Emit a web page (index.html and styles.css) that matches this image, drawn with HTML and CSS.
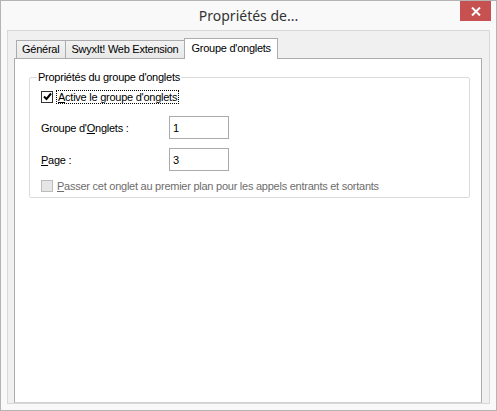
FILE: index.html
```html
<!DOCTYPE html>
<html lang="fr">

<head>
    <meta charset="UTF-8">
    <title>Propriétés de...</title>
    <link rel="stylesheet" href="styles.css">
</head>

<body>
    <div class="window">
        <div class="titlebar">
            <span></span>
            <span class="title">Propriétés de...</span>
            <button class="close" aria-label="Fermer">
                <svg width="10" height="9" viewBox="0 0 10 9">
                    <path d="M1 0.5 L9 8.5 M9 0.5 L1 8.5" stroke="#fff" stroke-width="2" fill="none" />
                </svg>
            </button>
        </div>

        <div class="panel">
            <div class="tabs">
                <div class="tab">Général</div>
                <div class="tab">SwyxIt! Web Extension</div>
                <div class="tab active">Groupe d'onglets</div>
            </div>

            <div class="tab-page">
                <fieldset class="group">
                    <legend>Propriétés du groupe d'onglets</legend>

                    <label class="check-row">
                        <span class="box checked">
                            <svg width="9" height="9" viewBox="0 0 9 9">
                                <path d="M1 4.5 L3.5 7 L8 1.5" stroke="#000" stroke-width="2" fill="none" />
                            </svg>
                        </span>
                        <span class="focus"><u>A</u>ctive le groupe d'onglets</span>
                    </label>

                    <div class="field-row">
                        <span class="field-label">Groupe d'<u>O</u>nglets :</span>
                        <input class="field" type="text" value="1">
                    </div>

                    <div class="field-row">
                        <span class="field-label"><u>P</u>age :</span>
                        <input class="field" type="text" value="3">
                    </div>

                    <label class="check-row disabled">
                        <span class="box"></span>
                        <span><u>P</u>asser cet onglet au premier plan pour les appels entrants et sortants</span>
                    </label>
                </fieldset>
            </div>
        </div>
    </div>
</body>

</html>
```

FILE: styles.css
```css
* {
    box-sizing: border-box;
}

body {
    margin: 0;
    font-family: "Liberation Sans", Arial, sans-serif;
    font-size: 11px;
    letter-spacing: -0.25px;
    color: #000;
}

.window {
    width: 497px;
    height: 411px;
    border: 1px solid #b4b4b4;
    background: #f9f9f9;
    display: flex;
    flex-direction: column;
}

.titlebar {
    height: 29px;
    display: grid;
    grid-template-columns: 1fr auto 1fr;
    align-items: start;
}

.title {
    font-family: "Noto Sans", sans-serif;
    font-size: 14px;
    letter-spacing: 0;
    color: #333;
    line-height: 29px;
}

.close {
    justify-self: end;
    width: 31px;
    height: 20px;
    margin-right: 5px;
    border: none;
    padding: 0;
    background: #c75050;
    display: flex;
    align-items: center;
    justify-content: center;
}

.panel {
    flex: 1;
    margin: 0 6px 6px;
    border: 1px solid #d9d9d9;
    background: #f0f0f0;
    padding: 7px 7px 0 6px;
    display: flex;
    flex-direction: column;
}

.tabs {
    display: flex;
    align-items: flex-end;
    height: 20px;
    padding-left: 2px;
}

.tab {
    height: 18px;
    padding: 0 6px 0 5px;
    border: 1px solid #acacac;
    border-bottom: none;
    margin-right: -1px;
    background: linear-gradient(#f2f2f2, #e8e8e8);
    line-height: 17px;
    white-space: nowrap;
}

.tab.active {
    position: relative;
    height: 21px;
    margin: 0 0 -1px 0;
    padding: 0 6px;
    background: #fff;
    line-height: 18px;
}

.tab-page {
    flex: 1;
    background: #fff;
    border: 1px solid #acacac;
    border-bottom-color: #d0d0d0;
    padding: 12px 11px 0 14px;
}

.group {
    margin: 0;
    border: 1px solid #dcdcdc;
    border-radius: 2px;
    padding: 6px 0 4px 11px;
    height: 127px;
}

.group legend {
    padding: 0 1px;
    margin-left: -4px;
}

.check-row {
    display: flex;
    align-items: center;
    gap: 4px;
    height: 15px;
}

.box {
    width: 12px;
    height: 12px;
    border: 1px solid #333;
    background: #fff;
    display: flex;
    align-items: center;
    justify-content: center;
}

.focus {
    outline: 1px dotted #000;
    padding: 0 1px;
}

.field-row {
    display: flex;
    align-items: center;
    margin-top: 12px;
}

.field-row + .field-row {
    margin-top: 9px;
}

.field-label {
    width: 128px;
}

.field {
    width: 60px;
    height: 23px;
    border: 1px solid #ababab;
    padding: 0 3px;
    font: inherit;
    color: #000;
}

.check-row.disabled {
    margin-top: 7px;
    color: #6d6d6d;
}

.check-row.disabled .box {
    border-color: #bcbcbc;
    background: #e6e6e6;
}
```
